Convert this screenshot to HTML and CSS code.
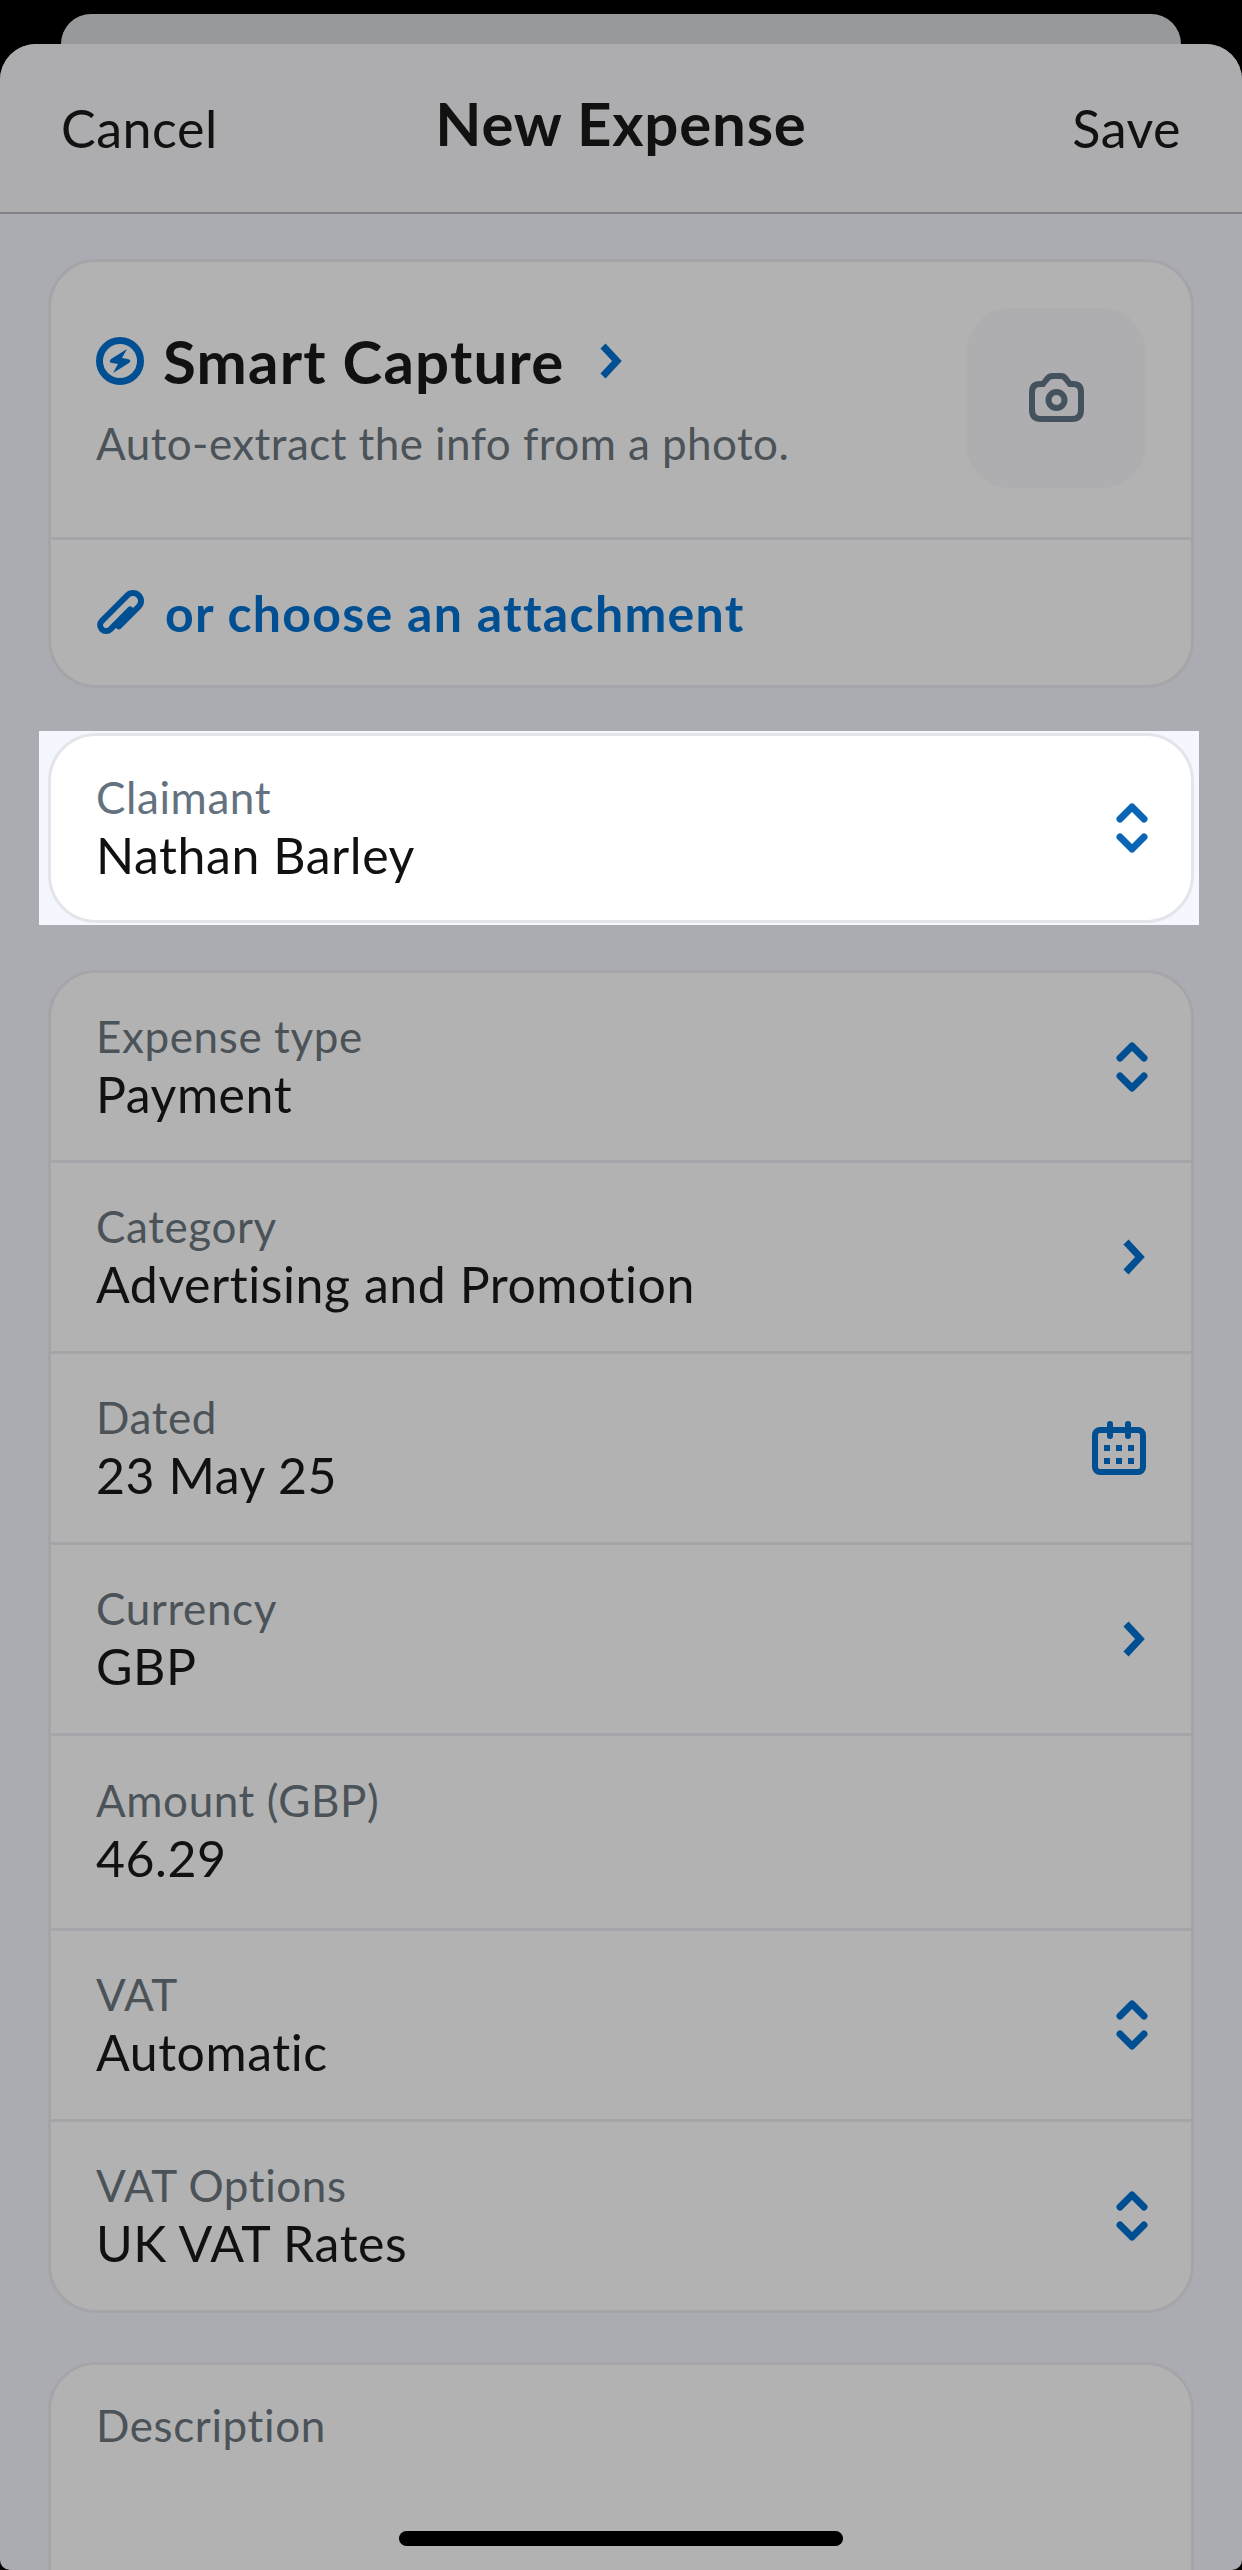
FILE: index.html
```html
<!DOCTYPE HTML>
<html lang="en">
<head>
    <meta charset="UTF-8">
    <title>New Expense</title>
    <link rel="stylesheet" href="styles.css">
</head>
<body>

<svg class="defs" width="0" height="0">
    <symbol id="updown" viewBox="0 0 32 52">
        <path d="M4 17 L16 5 L28 17 M4 35 L16 47 L28 35" fill="none" stroke="currentColor" stroke-width="7" stroke-linecap="round" stroke-linejoin="round"/>
    </symbol>
    <symbol id="chevron" viewBox="0 0 22 36">
        <path d="M3 3 L17 18 L3 33" fill="none" stroke="currentColor" stroke-width="7"/>
    </symbol>
</svg>

<div class="backCard"></div>

<div class="sheet">
    <div class="navBar">
        <span class="navLeft">Cancel</span>
        <span class="navTitle">New Expense</span>
        <span class="navRight">Save</span>
    </div>

    <div class="content">
        <div class="card">
            <div class="capture">
                <div class="captureText">
                    <div class="captureTitle">
                        <svg class="boltIcon" viewBox="0 0 48 48">
                            <circle cx="24" cy="24" r="20.5" fill="none" stroke="#004f92" stroke-width="7"/>
                            <path d="M31 12 L15 22 Q12 25 16 26 L22 27 L17 36 L33 26 Q36 23 32 22 L26 21 Z" fill="#004f92"/>
                        </svg>
                        <span>Smart Capture</span>
                        <svg class="titleChevron"><use href="#chevron"/></svg>
                    </div>
                    <div class="captureSub">Auto-extract the info from a photo.</div>
                </div>
                <div class="cameraTile">
                    <svg class="cameraIcon" viewBox="0 0 55 49">
                        <path d="M14 11 L18 6 Q20 3 24 3 H32 Q35 3 37 6 L41 11 H44 Q52 11 52 19 V37 Q52 46 43 46 H12 Q3 46 3 37 V19 Q3 11 11 11 Z" fill="none" stroke="#44525d" stroke-width="6"/>
                        <circle cx="27.5" cy="27" r="8" fill="none" stroke="#44525d" stroke-width="6"/>
                    </svg>
                </div>
            </div>
            <div class="attach">
                <svg class="clipIcon" viewBox="-24 -24 48 48">
                    <g transform="rotate(45)">
                        <path d="M8 11 V-17 a8 8 0 0 0 -16 0 V19 a6 6 0 0 0 12 0 V-9" fill="none" stroke="#004f92" stroke-width="6" stroke-linecap="round"/>
                    </g>
                </svg>
                <span>or choose an attachment</span>
            </div>
        </div>

        <div class="highlight">
            <div class="card cardLit">
                <div class="row rowLit">
                    <div class="field">
                        <div class="label">Claimant</div>
                        <div class="value">Nathan Barley</div>
                    </div>
                    <svg class="updown"><use href="#updown"/></svg>
                </div>
            </div>
        </div>

        <div class="card">
            <div class="row rowFirst">
                <div class="field">
                    <div class="label">Expense type</div>
                    <div class="value">Payment</div>
                </div>
                <svg class="updown"><use href="#updown"/></svg>
            </div>
            <div class="row">
                <div class="field">
                    <div class="label">Category</div>
                    <div class="value">Advertising and Promotion</div>
                </div>
                <svg class="chevron"><use href="#chevron"/></svg>
            </div>
            <div class="row">
                <div class="field">
                    <div class="label">Dated</div>
                    <div class="value">23 May 25</div>
                </div>
                <svg class="calIcon" viewBox="0 0 54 54">
                    <rect x="3" y="9" width="48" height="42" rx="5" fill="none" stroke="#004f92" stroke-width="6"/>
                    <path d="M18 3 V15 M36 3 V15" stroke="#004f92" stroke-width="6" stroke-linecap="round"/>
                    <path d="M12 24 h6 v6 h-6 z M24 24 h6 v6 h-6 z M36 24 h6 v6 h-6 z M12 37 h6 v6 h-6 z M24 37 h6 v6 h-6 z M36 37 h6 v6 h-6 z" fill="#004f92"/>
                </svg>
            </div>
            <div class="row">
                <div class="field">
                    <div class="label">Currency</div>
                    <div class="value">GBP</div>
                </div>
                <svg class="chevron"><use href="#chevron"/></svg>
            </div>
            <div class="row rowTall">
                <div class="field">
                    <div class="label">Amount (GBP)</div>
                    <div class="value">46.29</div>
                </div>
            </div>
            <div class="row">
                <div class="field">
                    <div class="label">VAT</div>
                    <div class="value">Automatic</div>
                </div>
                <svg class="updown"><use href="#updown"/></svg>
            </div>
            <div class="row rowLast">
                <div class="field">
                    <div class="label">VAT Options</div>
                    <div class="value">UK VAT Rates</div>
                </div>
                <svg class="updown"><use href="#updown"/></svg>
            </div>
        </div>

        <div class="card cardDesc">
            <div class="label">Description</div>
        </div>
    </div>
</div>

<div class="homeBar"></div>

</body>
</html>
```

FILE: styles.css
```css
html, body {
    margin: 0;
    height: 2570px;
    overflow: hidden;
}

body {
    background-color: #000;
    font-family: "Lato", "Liberation Sans", sans-serif;
    color: #111;
    padding-top: 14px;
    box-sizing: border-box;
}

.defs {
    position: absolute;
}

.backCard {
    height: 30px;
    margin: 0 61px;
    background-color: #98999b;
    border-radius: 30px 30px 0 0;
}

.sheet {
    height: 2526px;
    background-color: #abacb1;
    border-radius: 36px 36px 10px 10px;
    overflow: hidden;
}

.navBar {
    height: 168px;
    padding: 0 61px;
    background-color: #adadaf;
    border-bottom: 2px solid #828286;
    display: grid;
    grid-template-columns: 1fr auto 1fr;
    align-items: center;
    font-size: 52px;
    letter-spacing: 0.5px;
}

.navTitle {
    font-size: 60px;
    font-weight: 700;
    letter-spacing: 0.8px;
    margin-bottom: 10px;
}

.navRight {
    text-align: right;
}

.content {
    padding: 45px 48px 0 48px;
}

.card {
    background-color: #b2b2b2;
    border: 3px solid #a5a5a9;
    border-radius: 48px;
    margin-bottom: 49px;
}

.capture {
    height: 275px;
    padding: 0 45px;
    display: flex;
    justify-content: space-between;
    align-items: center;
    border-bottom: 3px solid #a5a5a9;
}

.captureText {
    margin-bottom: 5px;
}

.captureTitle {
    display: flex;
    align-items: center;
    font-size: 60px;
    line-height: 72px;
    font-weight: 700;
    letter-spacing: 1.2px;
}

.boltIcon {
    width: 48px;
    height: 48px;
    margin-right: 19px;
}

.titleChevron {
    width: 22px;
    height: 36px;
    margin-left: 36px;
    color: #004f92;
}

.captureSub {
    font-size: 44px;
    line-height: 54px;
    letter-spacing: 0.43px;
    color: #4b5359;
    margin-top: 19px;
}

.cameraTile {
    width: 180px;
    height: 180px;
    border-radius: 45px;
    background-color: #aeaeb0;
    margin-bottom: 4px;
    display: flex;
    justify-content: center;
    align-items: center;
}

.cameraIcon {
    width: 55px;
    height: 49px;
}

.attach {
    height: 145px;
    padding: 0 46px;
    display: flex;
    align-items: center;
    font-size: 50px;
    font-weight: 700;
    letter-spacing: 1.3px;
    color: #004f92;
}

.clipIcon {
    width: 48px;
    height: 48px;
    margin-right: 20px;
}

.highlight {
    background-color: #f5f7ff;
    padding: 2px 5px 2px 9px;
    margin: -6px -5px 45px -9px;
}

.cardLit {
    background-color: #fff;
    border-color: #e3e5ea;
    margin-bottom: 0;
}

.cardLit .label {
    color: #64727f;
}

.cardLit .updown {
    color: #0a66b5;
}

.row {
    height: 188px;
    padding: 0 43px 0 45px;
    display: flex;
    justify-content: space-between;
    align-items: center;
    border-bottom: 3px solid #a5a5a9;
}

.rowFirst {
    height: 187px;
}

.rowTall {
    height: 192px;
}

.rowTall .field {
    padding-bottom: 4px;
}

.rowLast {
    height: 188px;
    border-bottom: none;
}

.rowLit {
    height: 184px;
    border-bottom: none;
}

.field {
    padding-bottom: 2px;
}

.label {
    font-size: 44px;
    line-height: 56px;
    letter-spacing: 0.6px;
    color: #4b5359;
}

.value {
    font-size: 50px;
    line-height: 60px;
    letter-spacing: 0.55px;
    color: #111;
}

.updown {
    width: 32px;
    height: 52px;
    color: #004f92;
}

.chevron {
    width: 22px;
    height: 36px;
    margin-right: 3px;
    color: #004f92;
}

.calIcon {
    width: 54px;
    height: 54px;
    margin-right: 2px;
}

.cardDesc {
    height: 400px;
    padding: 32px 45px;
}

.homeBar {
    position: absolute;
    left: 399px;
    top: 2531px;
    width: 444px;
    height: 15px;
    border-radius: 8px;
    background-color: #000;
}
```
